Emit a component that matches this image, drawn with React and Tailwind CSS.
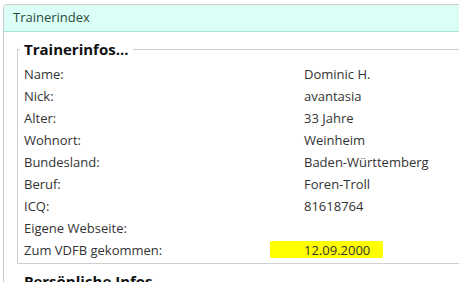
import React from 'react';

const rows = [
  ['Name:', 'Dominic H.'],
  ['Nick:', 'avantasia'],
  ['Alter:', '33 Jahre'],
  ['Wohnort:', 'Weinheim'],
  ['Bundesland:', 'Baden-Württemberg'],
  ['Beruf:', 'Foren-Troll'],
  ['ICQ:', '81618764'],
  ['Eigene Webseite:', ''],
  ['Zum VDFB gekommen:', '12.09.2000', true],
];

export default function App() {
  return (
    <div
      className="w-[459px] h-[282px] overflow-hidden bg-white pl-[3px] pt-[4px] text-[#333]"
      style={{ fontFamily: '"Open Sans", "Noto Sans", sans-serif' }}
    >
      <div className="w-[480px] h-[300px] border border-[#c3cccb] rounded-tl-[4px]">
        {/* header bar */}
        <div className="h-[27px] bg-[#dbfff7] border-b border-[#a6e6d9] rounded-tl-[4px] pl-[9px] flex items-center text-[13px] text-[#2b4a3c]">
          Trainerindex
        </div>

        <div className="pl-[13px] pt-[8px]">
          <fieldset className="border-t border-l border-b border-[#cfcfcf] pl-[2px] pb-[1px]">
            <legend className="px-[4px] text-[15px] font-bold text-[#111] leading-[18px]">
              Trainerinfos...
            </legend>
            <div className="pl-[4px] pt-[6px]">
              {rows.map(([label, value, marked]) => (
                <div key={label} className="flex h-[22px] items-center text-[13px]">
                  <div className="w-[280px]">{label}</div>
                  <div className="relative">
                    {marked && (
                      <span className="absolute left-[-34px] top-[0px] w-[113px] h-[17px] bg-[#ffff00] rounded-[2px]" />
                    )}
                    <span className="relative">{value}</span>
                  </div>
                </div>
              ))}
            </div>
          </fieldset>
          <div className="pl-[7px] pt-[8px] text-[15px] font-bold text-[#111] leading-[18px]">
            Persönliche Infos
          </div>
        </div>
      </div>
    </div>
  );
}
